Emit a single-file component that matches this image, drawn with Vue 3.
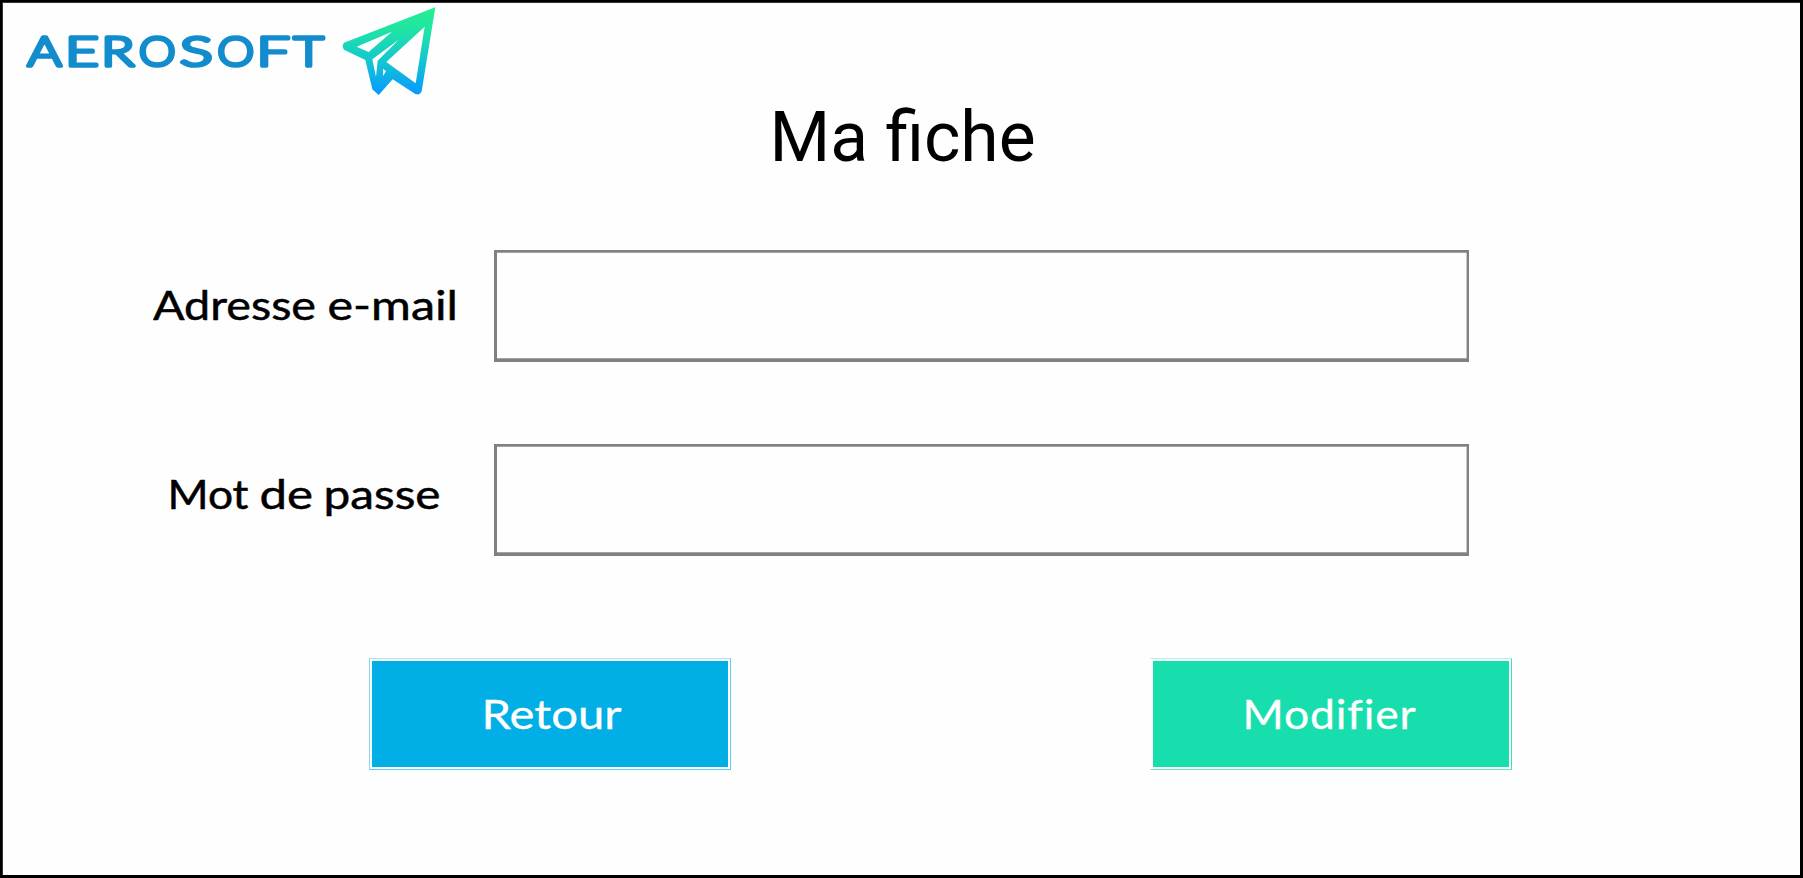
<script setup>
const brand = [
  ['A', 27.6, 34], ['E', 64.9, 34], ['R', 101.2, 33], ['O', 138.8, 37],
  ['S', 179.8, 33], ['O', 217.3, 37], ['F', 256.4, 33.4], ['T', 293.4, 30.4],
]
</script>

<template>
  <div class="page">
    <header class="brand">
      <svg class="wordmark" width="336" height="96" viewBox="0 0 336 96" role="img" aria-label="Aerosoft">
        <text v-for="(l, i) in brand" :key="i" :x="l[1]" y="65.6" :textLength="l[2]" lengthAdjust="spacingAndGlyphs">{{ l[0] }}</text>
      </svg>
      <svg class="plane" width="114" height="96" viewBox="18 0 342 288" aria-hidden="true">
        <defs>
          <linearGradient id="sky" x1="0" y1="22" x2="0" y2="284" gradientUnits="userSpaceOnUse">
            <stop offset="0" stop-color="#25f08f" />
            <stop offset=".25" stop-color="#20e4a4" />
            <stop offset=".6" stop-color="#14c8cf" />
            <stop offset="1" stop-color="#0898ff" />
          </linearGradient>
        </defs>
        <path fill="url(#sky)" fill-rule="evenodd" d="M316 22 L42 128 Q34 138 42 149 L106 180 L127 268 L146 285 L188 238 L256 282 Q270 287 275 274 Z M80 140 L186 95 L116 156 Z M127 178 L206 119 L143 182 L138 230 Z M169 186 L284 80 L257 250 Z M159 206 L168 214 L159 228 Z" />
      </svg>
    </header>

    <h1 class="title">Ma fiche</h1>

    <form class="form" @submit.prevent>
      <div class="row">
        <label for="email">
          <svg width="341" height="112">
            <text y="69.5" class="word">
              <tspan x="0" textLength="163" lengthAdjust="spacingAndGlyphs">Adresse</tspan>
              <tspan x="174.5" textLength="130.5" lengthAdjust="spacingAndGlyphs">e-mail</tspan>
            </text>
          </svg>
        </label>
        <input id="email" type="email">
      </div>
      <div class="row">
        <label for="password">
          <svg width="341" height="112">
            <text y="65" class="word">
              <tspan x="14.5" textLength="81" lengthAdjust="spacingAndGlyphs">Mot</tspan>
              <tspan x="106.5" textLength="53.5" lengthAdjust="spacingAndGlyphs">de</tspan>
              <tspan x="170.5" textLength="117" lengthAdjust="spacingAndGlyphs">passe</tspan>
            </text>
          </svg>
        </label>
        <input id="password" type="password">
      </div>

      <div class="actions">
        <button type="button" class="back">
          <svg width="356" height="106">
            <text x="109.5" y="67.5" class="word" textLength="140" lengthAdjust="spacingAndGlyphs">Retour</text>
          </svg>
        </button>
        <button type="submit" class="edit">
          <svg width="356" height="106">
            <text x="89.5" y="67.5" class="word spaced" textLength="174" lengthAdjust="spacingAndGlyphs">Modifier</text>
          </svg>
        </button>
      </div>
    </form>
  </div>
</template>

<style>
body { margin: 0; background: #fefefe; }
</style>

<style scoped>
.page {
  box-sizing: border-box;
  width: 1803px;
  height: 878px;
  background: #fefefe;
  border: 3px solid #000;
  border-width: 2px 3px 3px 2px;
  box-shadow: inset 1px 1px #333;
  overflow: hidden;
}
.brand { display: flex; height: 96px; margin: -2px 0 0 -2px; }
.brand svg { display: block; }
.wordmark text {
  font: 300 42px Lato, sans-serif;
  fill: #128ccc;
  stroke: #128ccc;
  stroke-width: 3.7px;
  stroke-linejoin: round;
}
.wordmark, .plane { filter: blur(0.6px); }
.title {
  margin: 0 0 0 -2px;
  padding-left: 769.5px;
  font: 400 69.6px/82px Roboto, sans-serif;
  color: #000;
}
.form { margin: 72px 0 0 -2px; display: flex; flex-direction: column; gap: 82px; }
.row { display: flex; padding-left: 153px; height: 112px; }
label, label svg, button svg { display: block; }
.word {
  font: 400 41px Lato, sans-serif;
  font-variant-ligatures: none;
  fill: #000;
  stroke: #000;
  stroke-width: 0.5px;
}
.word.spaced { letter-spacing: 0.8px; }
input {
  box-sizing: border-box;
  width: 975px;
  height: 112px;
  padding: 0 20px;
  border: 3px solid #808080;
  border-width: 2px 2px 3px 3px;
  border-radius: 0;
  box-shadow: inset 0 1px #a3a3a3, inset 0 -1px #a3a3a3, inset -1px 0 #ccc;
  background: #fefefe;
  font: 36px Lato, sans-serif;
  outline: none;
}
.actions { display: flex; gap: 419px; padding-left: 369px; margin-top: 20px; }
button {
  box-sizing: border-box;
  width: 362px;
  height: 112px;
  padding: 2px;
  border: 1px solid;
  background-clip: content-box;
}
.back { background-color: #02aee6; border-color: #a9e2f5 #62ccef #62ccef #80d8f4; }
.edit { background-color: #18ddad; border-color: #b2f4e4 #39e2b9 #66e9c9 transparent; }
button .word { fill: #fff; stroke: #fff; stroke-width: 0.3px; }
</style>
